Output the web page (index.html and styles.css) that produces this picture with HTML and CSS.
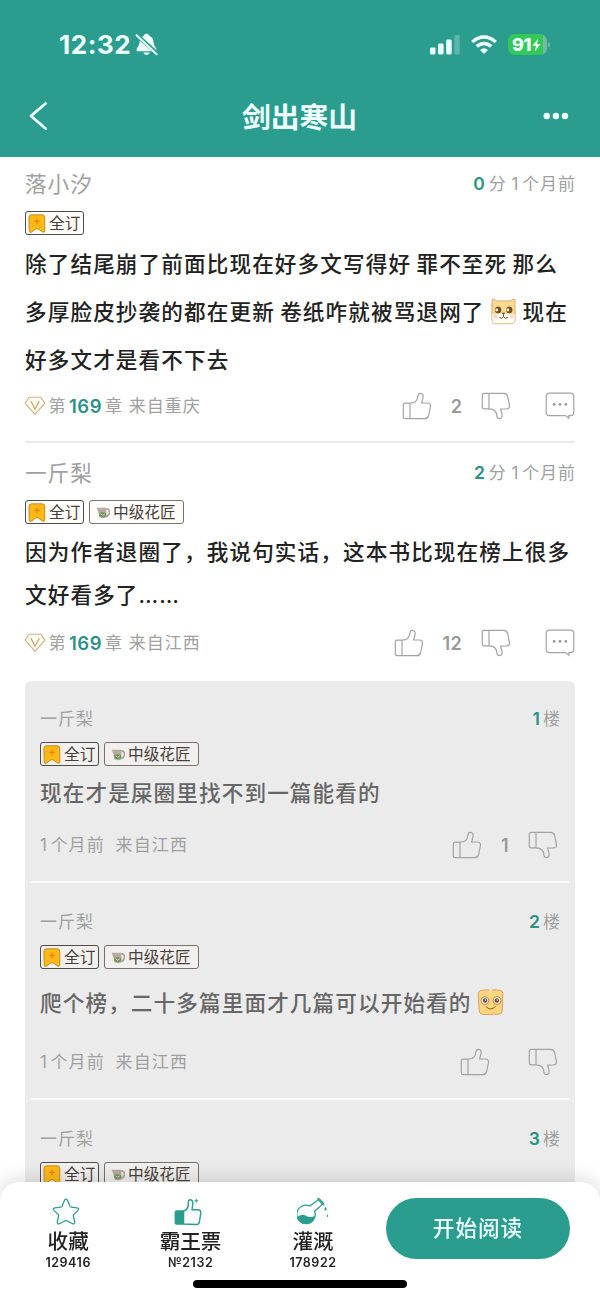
FILE: index.html
```html
<!DOCTYPE html>
<html lang="zh-CN">
<head>
<meta charset="utf-8">
<title>剑出寒山</title>
<link rel="stylesheet" href="styles.css">
</head>
<body>
<svg class="defs" aria-hidden="true">
  <symbol id="thumb" viewBox="0 0 30 28"><path d="M8 11.2C13 11 15.6 8.5 15.9 4.2C16 2.3 17 1.3 18.4 1.3C20.8 1.3 21.6 3.6 20.9 6.2L19.6 11H25.4C27.8 11 28.9 12.5 28.4 14.8L26.6 23.5C26.1 25.6 24.8 26.7 22.8 26.7H3.2C2 26.7 1.3 26 1.3 24.8V13.2C1.3 12 2 11.2 3.2 11.2H8V26.7"/></symbol>
  <symbol id="chat" viewBox="0 0 30 28"><path d="M4.5 1.2H25.5Q28.8 1.2 28.8 4.5V20.3Q28.8 23.6 25.5 23.6H23.9V26.3L20.5 23.6H4.5Q1.2 23.6 1.2 20.3V4.5Q1.2 1.2 4.5 1.2Z"/><g fill="#999" stroke="none"><circle cx="9.2" cy="12.4" r="1.4"/><circle cx="15" cy="12.4" r="1.4"/><circle cx="20.8" cy="12.4" r="1.4"/></g></symbol>
  <symbol id="mark" viewBox="0 0 18 20"><path d="M3.5 .8H14Q16.8 .8 16.8 3.6V16.5Q16.8 19 14.6 18L10.5 15.2Q9 14.2 7.5 15.2L3.4 18.2Q1.2 19.2 1.2 16.8L.9 3.6Q.9 .8 3.5 .8Z" fill="#fdb916" stroke="#b98718" stroke-width=".9"/><path d="M9 4.6V10.2M6.2 7.4H11.8" stroke="#f17c12" stroke-width="1.2"/></symbol>
  <symbol id="can" viewBox="0 0 14 12"><path d="M.5 .8H10.5L10.3 10.5Q6.5 12 3.3 10.2L2.4 5Z" fill="#b9aaa0"/><path d="M10.3 1.8C14.7 1.6 14.2 9 9.8 9.4" fill="none" stroke="#b0a39b" stroke-width="1.7"/><ellipse cx="6.7" cy="7.6" rx="3.6" ry="2.3" fill="#6f945a"/><path d="M4.6 6.8L6.7 8.3L8.9 6.8" fill="none" stroke="#d3e0be" stroke-width="1"/></symbol>
  <symbol id="gem" viewBox="0 0 22 20"><path d="M5.2 1.2H16.8L21 7.1L11 18.3L1 7.1Z" fill="#fffaf2" stroke="#ceb180" stroke-width="1.1" stroke-linejoin="round"/><path d="M7 5.3L11 13.2L15.3 5.3" fill="none" stroke="#cba56a" stroke-width="1.3"/></symbol>
</svg>

<header class="top">
  <div class="status">
    <div class="clock">12:32
      <svg class="bell" viewBox="0 0 24 24"><path d="M12 .8C14 .8 14.8 2.2 15 3.2C18.7 4.5 19.2 7.2 19.5 10.5C19.8 14 22.5 15.8 22.5 17.7Q22.5 19 21 19H3Q1.6 19 1.6 17.7C1.6 15.8 4.3 14 4.6 10.5C4.9 7 5.8 4.5 9 3.2C9.2 2.2 10 .8 12 .8ZM8.6 20.4H15.4Q14.8 23 12 23Q9.2 23 8.6 20.4Z" fill="#efffff"/><path d="M2.3 2.5L23 21.2" stroke="#2a9d8f" stroke-width="4.2"/><path d="M1.6 2.3L22.6 22.2" stroke="#efffff" stroke-width="2" stroke-linecap="round"/></svg>
    </div>
    <div class="signals">
      <svg class="cell" viewBox="0 0 30 20" fill="#efffff"><rect y="12.4" width="5.5" height="7" rx="1.4"/><rect x="8.1" y="8.5" width="5.5" height="10.9" rx="1.4"/><rect x="16.2" y="4.4" width="5.5" height="15" rx="1.4"/><rect x="24.3" y="0" width="5.5" height="19.4" rx="1.4" opacity=".25"/></svg>
      <svg class="wifi" viewBox="0 0 26 20" fill="none" stroke="#efffff" stroke-width="3.5"><path d="M1.3 7.1C8 .2 18 .2 24.7 7.1M5.8 11.6C10 7.4 16 7.4 20.2 11.6"/><path d="M13 19L9 15Q13 11.3 17 15Z" fill="#efffff" stroke="none"/></svg>
      <div class="battery"><span>91</span><svg viewBox="0 0 9 14"><path d="M6.2 .5L.5 7.7H4L2.8 13.5L8.5 6H5Z" fill="#efffff"/></svg></div>
    </div>
  </div>
  <div class="titlebar">
    <svg class="back" viewBox="0 0 20 30"><path d="M17.6 2.5L3 14.9L17.6 27.6" fill="none" stroke="#efffff" stroke-width="2.7" stroke-linecap="round" stroke-linejoin="round"/></svg>
    <h1>剑出寒山</h1>
    <svg class="more" viewBox="0 0 26 8" fill="#efffff"><circle cx="3.7" cy="4" r="3.2"/><circle cx="12.9" cy="4" r="3.2"/><circle cx="22" cy="4" r="3.2"/></svg>
  </div>
</header>

<main class="feed">
  <article class="comment">
    <div class="head"><span class="name">落小汐</span><span class="when"><b>0</b>分 <span class="one">1</span>个月前</span></div>
    <div class="tags"><span class="tag full"><svg class="mark"><use href="#mark"/></svg>全订</span></div>
    <p class="text tall">除了结尾崩了前面比现在好多文写得好 罪不至死 那么<br>多厚脸皮抄袭的都在更新 卷纸咋就被骂退网了<svg class="face dog" viewBox="0 0 28 28"><path d="M2 8L2.4 1.5Q3.4 0 6.5 3H21Q24 0 25.8 1.5L26 8V23Q26 26.7 22 26.7H6Q2 26.7 2 23V7Z" fill="#f9dc92" stroke="#d5a06b" stroke-width=".9"/><path d="M2.5 16C7 20 10 14 14 16.3C18 14 21 20 25.5 16V23Q25.5 26.3 22 26.3H6Q2.5 26.3 2.5 23Z" fill="#fffdf5"/><path d="M6.5 9L10 8M18 8L21.5 9" stroke="#e9b777"/><circle cx="8.4" cy="12.4" r="3.3" fill="#754a20"/><circle cx="20" cy="12.4" r="3.3" fill="#754a20"/><circle cx="7" cy="12.5" r="1.5" fill="#fff6db"/><circle cx="18.5" cy="12.5" r="1.5" fill="#fff6db"/><path d="M12 15.2H16L14 17.6Z" fill="#754a20"/><path d="M14 17V19.4Q12 22.4 9.6 20M14 19.4Q16 22.4 18.6 20" fill="none" stroke="#754a20"/><circle cx="5.5" cy="19.3" r="2" fill="#fbd8c5"/><circle cx="22.6" cy="19.3" r="2" fill="#fbd8c5"/></svg>现在<br>好多文才是看不下去</p>
    <div class="meta">
      <span class="origin"><svg class="gem"><use href="#gem"/></svg><span>第</span><b>169</b><span>章 来自重庆</span></span>
      <span class="acts"><svg class="ic"><use href="#thumb"/></svg><span class="num">2</span><svg class="ic down"><use href="#thumb"/></svg><svg class="ic chat"><use href="#chat"/></svg></span>
    </div>
  </article>

  <article class="comment second">
    <div class="head"><span class="name">一斤梨</span><span class="when"><b>2</b>分 <span class="one">1</span>个月前</span></div>
    <div class="tags"><span class="tag full"><svg class="mark"><use href="#mark"/></svg>全订</span><span class="tag rank"><svg class="can"><use href="#can"/></svg>中级花匠</span></div>
    <p class="text">因为作者退圈了，我说句实话，这本书比现在榜上很多<br>文好看多了……</p>
    <div class="meta">
      <span class="origin"><svg class="gem"><use href="#gem"/></svg><span>第</span><b>169</b><span>章 来自江西</span></span>
      <span class="acts"><svg class="ic"><use href="#thumb"/></svg><span class="num">12</span><svg class="ic down"><use href="#thumb"/></svg><svg class="ic chat"><use href="#chat"/></svg></span>
    </div>
    <section class="replies">
      <div class="reply">
        <div class="head"><span>一斤梨</span><span class="floor"><b>1</b>楼</span></div>
        <div class="tags"><span class="tag full"><svg class="mark"><use href="#mark"/></svg>全订</span><span class="tag rank"><svg class="can"><use href="#can"/></svg>中级花匠</span></div>
        <p class="text">现在才是屎圈里找不到一篇能看的</p>
        <div class="meta"><span class="origin"><span><span class="one">1</span>个月前&nbsp; 来自江西</span></span><span class="acts"><svg class="ic"><use href="#thumb"/></svg><span class="num">1</span><svg class="ic down"><use href="#thumb"/></svg></span></div>
      </div>
      <div class="reply roomy">
        <div class="head"><span>一斤梨</span><span class="floor"><b>2</b>楼</span></div>
        <div class="tags"><span class="tag full"><svg class="mark"><use href="#mark"/></svg>全订</span><span class="tag rank"><svg class="can"><use href="#can"/></svg>中级花匠</span></div>
        <p class="text">爬个榜，二十多篇里面才几篇可以开始看的<svg class="face" viewBox="0 0 28 28"><path d="M5 1.5Q10 .5 13 1.2L14 2L15 1.2Q20 .5 24 1.5Q27 2 26.8 5L26 23Q26 26 22 26.3L17 26L14 26.6L7 26.3Q3 26.5 2.3 22.5L1.2 5.5Q1 2 5 1.5Z" fill="#fbd67d" stroke="#df9965" stroke-width="1"/><path d="M14 .4V3.5" stroke="#fdebbd" stroke-width="2"/><circle cx="8.2" cy="12" r="4.1" fill="#fff0cf" stroke="#a87850" stroke-width=".9"/><circle cx="20.8" cy="12" r="4.1" fill="#fff0cf" stroke="#a87850" stroke-width=".9"/><circle cx="8.4" cy="12" r="2.3" fill="#704c43"/><circle cx="20.6" cy="12" r="2.3" fill="#704c43"/><circle cx="8.8" cy="11.4" r=".7" fill="#fff"/><circle cx="21" cy="11.4" r=".7" fill="#fff"/><path d="M9.3 18.2Q14.2 23 19.2 18.2" fill="none" stroke="#9b4f25" stroke-width="1"/></svg></p>
        <div class="meta"><span class="origin"><span><span class="one">1</span>个月前&nbsp; 来自江西</span></span><span class="acts"><svg class="ic"><use href="#thumb"/></svg><span class="num"></span><svg class="ic down"><use href="#thumb"/></svg></span></div>
      </div>
      <div class="reply">
        <div class="head"><span>一斤梨</span><span class="floor"><b>3</b>楼</span></div>
        <div class="tags"><span class="tag full"><svg class="mark"><use href="#mark"/></svg>全订</span><span class="tag rank"><svg class="can"><use href="#can"/></svg>中级花匠</span></div>
      </div>
    </section>
  </article>
</main>

<footer class="dock">
  <div class="row">
    <nav class="tabs">
      <div class="tab"><svg class="tabicon" viewBox="0 0 28 28"><path d="M12.5 2.3Q14 .1 15.5 2.3L18 8.2Q18.4 9 19.3 9.1L25 9.8Q27.8 10.3 25.8 12.6L21.8 16.4Q21.2 17 21.4 17.8L22.7 23.8Q22.9 26.7 20.3 25.7L15 22.8Q14 22.3 13 22.8L7.7 25.7Q5.1 26.7 5.3 23.8L6.6 17.8Q6.8 17 6.2 16.4L2.2 12.6Q.2 10.3 3 9.8L8.7 9.1Q9.6 9 10 8.2Z" fill="none" stroke="#2a9d8f" stroke-width="1.3"/></svg><strong>收藏</strong><small>129416</small></div>
      <div class="tab"><svg class="tabicon thumbs" viewBox="0 0 28 28"><path d="M2.5 12.3H9.5V26.7H2.5Q.6 26.7 .6 25V14.1Q.6 12.3 2.5 12.3Z" fill="#2a9d8f"/><path d="M10 12.8Q15 11.5 14.2 4Q14.5 1.6 16.3 1.8Q19.2 2.2 18.8 6L18 11.8H24Q27.3 12 26.8 15L25.4 23.8Q25 26.4 22.5 26.5L9.6 26V12.8Z" fill="none" stroke="#2a9d8f" stroke-width="1.4"/><path d="M22.3 .8V4.6M20.4 2.7H24.2" stroke="#2a9d8f" stroke-width="1"/></svg><strong>霸王票</strong><small>№2132</small></div>
      <div class="tab"><svg class="tabicon flask" viewBox="0 0 34 28"><g fill="none" stroke="#2a9d8f" stroke-width="1.3"><path d="M12.8 8L21.4 1.8L25.5 6.3L17.6 13.2A9.2 9.2 0 1 1 12.8 8Z"/><path d="M20.3 1.2Q21.5 .1 22.6 1.2L26.4 5.2Q27.1 6.4 26 7.3"/></g><path d="M.8 18.5Q5.5 15 10.5 18.4Q14.5 20 17.9 17.8C16.5 24 13.5 26 9.6 26S2 24.5 .8 18.5Z" fill="#2a9d8f"/><path d="M28.5 8.8Q30.8 12.5 28.5 12.5Q26.4 12.5 28.5 8.8ZM30.5 16.3Q32 19 30.5 19Q29 19 30.5 16.3Z" fill="#2a9d8f"/></svg><strong>灌溉</strong><small>178922</small></div>
    </nav>
    <button class="read" type="button">开始阅读</button>
  </div>
  <div class="home"></div>
</footer>
</body>
</html>
```

FILE: styles.css
```css
* { box-sizing: border-box; }
html, body { margin: 0; height: 1300px; overflow: hidden; }
body {
  display: flex;
  flex-direction: column;
  width: 600px;
  background: #fff;
  color: #222;
  font-family: Inter, "Noto Sans CJK SC", sans-serif;
}
svg { display: block; flex: none; }
.defs { position: absolute; width: 0; height: 0; }
h1, p { margin: 0; }
b { font-weight: 600; color: #2a9284; }

.top { flex: none; height: 157px; background: #2a9d8f; color: #efffff; border-bottom: 1px solid #3c9388; }
.status { display: flex; justify-content: space-between; align-items: center; height: 89px; padding: 0 50px 0 59px; }
.clock { display: flex; align-items: center; gap: 4px; font-size: 26px; font-weight: 700; letter-spacing: .55px; }
.bell { width: 23px; height: 23px; }
.signals { display: flex; align-items: center; }
.cell { width: 30px; height: 20px; margin-right: 11px; }
.wifi { width: 26px; height: 20px; margin-right: 11px; }
.battery {
  position: relative;
  display: flex;
  align-items: center;
  gap: 1px;
  width: 39px;
  height: 21px;
  margin-right: 3px;
  padding-left: 4px;
  border-radius: 7px;
  background: linear-gradient(90deg, #34c759 91%, #73b99c 91%);
  font-size: 18px;
  font-weight: 800;
  letter-spacing: -.4px;
}
.battery::after { content: ""; position: absolute; left: 40px; top: 8px; width: 2px; height: 5px; border-radius: 0 2px 2px 0; background: #69b9ad; }
.battery svg { width: 9px; height: 14px; }
.titlebar { display: grid; grid-template-columns: 60px 1fr 60px; align-items: center; height: 53px; padding: 0 28px; }
.back { width: 20px; height: 30px; }
h1 { padding: 4px 1px 0 0; text-align: center; font-size: 28.8px; font-weight: 700; line-height: 44px; }
.more { width: 26px; height: 8px; justify-self: end; margin-right: 3px; }

.feed { flex: 1; min-height: 0; padding: 0 25px; }
.comment { padding: 12px 0 21px; border-bottom: 2px solid #e9e9e9; }
.second { padding-top: 15px; border: 0; }
.head { display: flex; justify-content: space-between; align-items: center; height: 28px; color: #a0a0a0; font-size: 17px; letter-spacing: 1px; }
.name { padding-bottom: 2px; font-size: 21.6px; }
.when b, .floor b { margin-right: 2px; font-size: 17.5px; }
.one { margin-right: 2.5px; }
.when { word-spacing: -1px; }
.when b { margin-right: 3px; }
.head > span:last-child { margin-right: -1px; padding-bottom: 1px; }
.tags { display: flex; gap: 5px; height: 24px; margin-top: 14px; }
.tag { display: flex; align-items: center; height: 24px; border: 1px solid #4e4b4b; border-radius: 3px; color: #4a4038; background: rgba(255, 250, 246, .35); font-size: 15.7px; line-height: 22px; white-space: nowrap; }
.full { width: 59px; padding: 1px 0 0 2px; gap: 3px; }
.rank { width: 95px; padding: 1px 0 0 6px; gap: 3px; border-color: #777070; }
.mark { width: 18px; height: 20px; }
.can { width: 14px; height: 12px; }
.text { margin-top: 7px; font-size: 21.6px; font-weight: 500; line-height: 43px; letter-spacing: 1.12px; word-spacing: -1.6px; white-space: nowrap; }
.tall { margin-top: 5px; line-height: 48px; }
.face { display: inline-block; width: 27px; height: 27px; margin: 0 6px 0 5px; vertical-align: -5px; }
.meta { display: flex; justify-content: space-between; align-items: center; height: 28px; margin-top: 8px; color: #a0a0a0; font-size: 17px; letter-spacing: 1px; }
.second > .meta { margin-top: 12px; }
.origin { display: flex; align-items: center; white-space: pre; }
.origin > span { padding-bottom: 3px; }
.origin b { margin: 0 3px 0 2.5px; font-size: 18.5px; letter-spacing: .5px; }
.gem { width: 22px; height: 20px; margin: 0 2.5px 0 -1px; }
.acts { display: flex; align-items: center; }
.ic { width: 30px; height: 28px; fill: none; stroke: #a3a3a3; stroke-width: 1.2; }
.down { transform: scaleY(-1); }
.chat { margin-left: 34px; }
.num { margin: 0 19px; color: #999; font-size: 18px; font-weight: 600; letter-spacing: 0; }
.second .num { letter-spacing: .3px; }

.replies { height: 640px; margin-top: 24px; padding: 1px 6px; border-radius: 6px; background: #ebebeb; }
.reply { padding: 22px 9px 22px; border-bottom: 2px solid #fafafa; }
.reply + .reply { padding-top: 24px; }
.reply .head > span:first-child { padding-bottom: 1px; }
.reply .tags { margin-top: 10px; }
.reply .text { margin-top: 6px; color: #666; line-height: 42px; }
.reply .meta { margin-top: 17px; }
.reply .origin { word-spacing: -.5px; letter-spacing: 1.1px; }
.reply .acts { margin-right: 2px; }
.roomy .text { margin-top: 13px; }
.roomy .meta { margin-top: 24px; }

.dock { position: fixed; left: 0; top: 1182px; width: 600px; height: 118px; padding-top: 16px; border-radius: 20px 20px 0 0; background: #fff; box-shadow: 0 -3px 20px rgba(0, 0, 0, .14); }
.row { display: flex; height: 82px; padding-left: 7px; }
.tabs { display: grid; grid-template-columns: repeat(3, 122.4px); width: 379px; }
.tab { display: flex; flex-direction: column; align-items: center; }
.tabicon { width: 28px; height: 28px; margin-right: 4px; }
.thumbs { margin-right: 6px; }
.flask { width: 34px; margin: 0 0 0 3px; }
.tab strong { margin-top: 2px; font-size: 20.6px; font-weight: 500; line-height: 27px; }
.tab small { font-size: 12.5px; font-weight: 600; line-height: 15px; letter-spacing: .55px; }
.read { width: 184px; height: 61px; padding: 0; border: 0; border-radius: 31px; background: #2a9d8f; color: #efffff; font: 500 21.6px/61px Inter, "Noto Sans CJK SC", sans-serif; letter-spacing: 1px; }
.home { width: 214px; height: 8px; margin: 0 auto; border-radius: 4px; background: #000; }
```
